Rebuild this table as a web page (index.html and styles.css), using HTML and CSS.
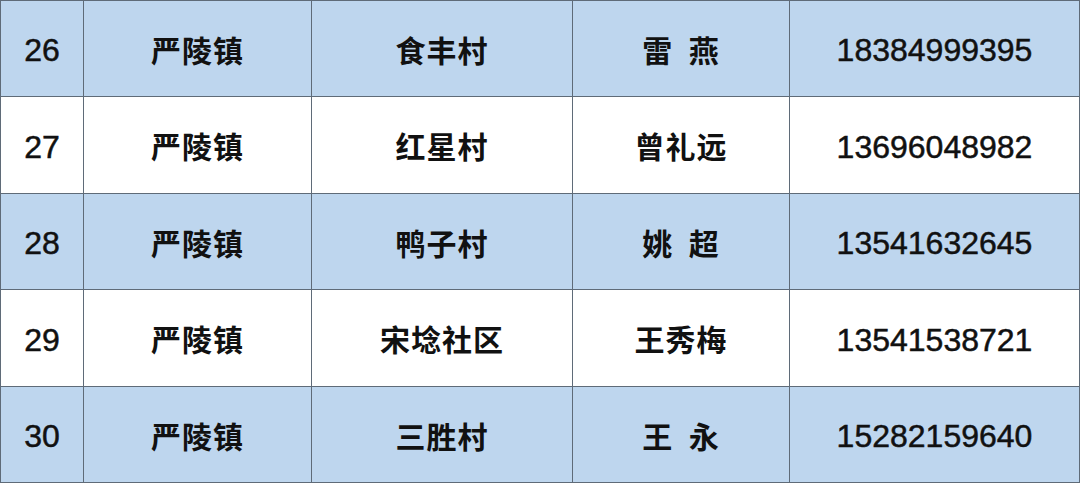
FILE: index.html
```html
<!DOCTYPE html>
<html lang="zh">
<head>
<meta charset="utf-8">
<link rel="stylesheet" href="styles.css">
</head>
<body>
<div class="table">
  <div class="cell blue num">26</div><div class="cell blue cn">严陵镇</div><div class="cell blue cn">食丰村</div><div class="cell blue cn">雷&nbsp;&nbsp;燕</div><div class="cell blue num">18384999395</div>
  <div class="cell num">27</div><div class="cell cn">严陵镇</div><div class="cell cn">红星村</div><div class="cell cn">曾礼远</div><div class="cell num">13696048982</div>
  <div class="cell blue num">28</div><div class="cell blue cn">严陵镇</div><div class="cell blue cn">鸭子村</div><div class="cell blue cn">姚&nbsp;&nbsp;超</div><div class="cell blue num">13541632645</div>
  <div class="cell num">29</div><div class="cell cn">严陵镇</div><div class="cell cn">宋埝社区</div><div class="cell cn">王秀梅</div><div class="cell num">13541538721</div>
  <div class="cell blue num">30</div><div class="cell blue cn">严陵镇</div><div class="cell blue cn">三胜村</div><div class="cell blue cn">王&nbsp;&nbsp;永</div><div class="cell blue num">15282159640</div>
</div>
</body>
</html>
```
FILE: styles.css
```css
html, body {
  margin: 0;
  padding: 0;
  background: #ffffff;
}
.table {
  display: grid;
  grid-template-columns: 82px 227px 260px 216px 289px;
  grid-template-rows: 95px 96px 95px 96px 95px;
  gap: 1px;
  padding: 1px;
  background: #5f6b78;
  width: 1080px;
  height: 483px;
  box-sizing: border-box;
}
.cell {
  background: #ffffff;
  display: flex;
  align-items: center;
  justify-content: center;
  color: #111111;
}
.cell.blue {
  background: #bed6ee;
}
.num {
  font-family: "Liberation Sans", Arial, sans-serif;
  font-size: 32px;
  padding-top: 4px;
  box-sizing: border-box;
  -webkit-text-stroke: 0.5px #111111;
}
.cn {
  font-family: "Noto Sans CJK SC", sans-serif;
  font-weight: bold;
  font-size: 30px;
  letter-spacing: 1px;
}
```
